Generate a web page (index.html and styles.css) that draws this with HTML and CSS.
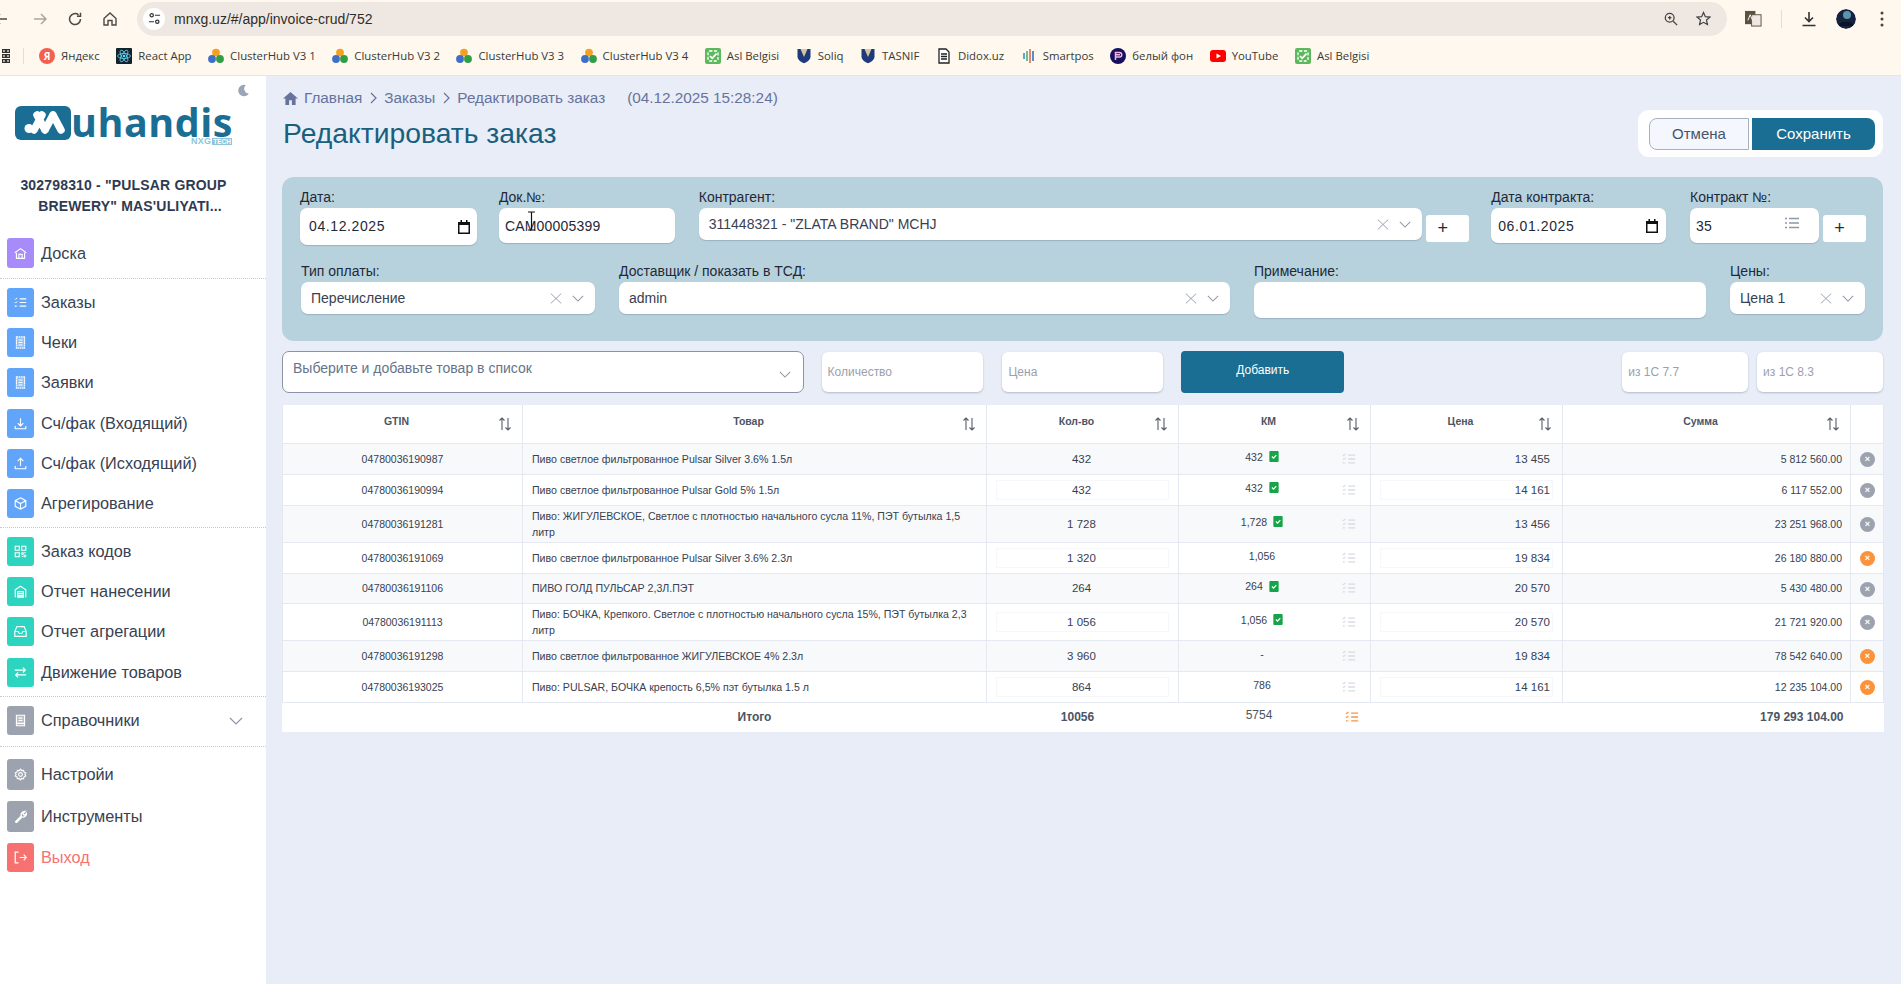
FILE: index.html
```html
<!DOCTYPE html>
<html lang="ru">
<head>
<meta charset="utf-8">
<title>Редактировать заказ</title>
<link rel="stylesheet" href="styles.css">
</head>
<body>
<svg class="defs" width="0" height="0" aria-hidden="true">
  <symbol id="cluster" viewBox="0 0 16 16"><circle cx="8" cy="4.6" r="3.9" fill="#f4a023"/><circle cx="4" cy="11" r="3.9" fill="#3f6fc4"/><circle cx="12" cy="11" r="3.9" fill="#2f9e44"/></symbol>
  <symbol id="asl" viewBox="0 0 16 16"><rect width="16" height="16" rx="2" fill="#5cb85c"/><rect x="3" y="3" width="10" height="10" rx="1.5" fill="none" stroke="#fff" stroke-width="1.3" stroke-dasharray="3 1.5"/><path d="M5 8l2.2 2.3L11.5 5.6" fill="none" stroke="#fff" stroke-width="1.8"/></symbol>
  <symbol id="shield" viewBox="0 0 16 16"><path d="M1.5 1h13v7.5c0 3.5-3.5 5.5-6.5 6.8-3-1.3-6.500-3.300-6.500-6.800z" fill="#1f3a7a"/><path d="M4.500 1h7L8 9z" fill="#d9c3a8"/></symbol>
  <symbol id="list" viewBox="0 0 16 16" fill="none" stroke="currentColor" stroke-width="1.500"><path d="M7 3.500h8M7 8h8M7 12.500h8"/><path d="M1 3.200l1 1 2-2M1 7.700l1 1 2-2" stroke-width="1.200"/><path d="M1 12.500h3" stroke-dasharray="1.500 .5"/></symbol>
  <symbol id="sort" viewBox="0 0 14 14" fill="none" stroke="currentColor" stroke-width="1.100"><path d="M4 13V1M1.500 3.500 4 1l2.500 2.500"/><path d="M10 1v12M7.500 10.500 10 13l2.500-2.500"/></symbol>
  <symbol id="chev" viewBox="0 0 14 8" fill="none" stroke="currentColor" stroke-width="1.200"><path d="M1 1l6 6 6-6"/></symbol>
  <symbol id="cross" viewBox="0 0 12 11" preserveAspectRatio="none" fill="none" stroke="currentColor" stroke-width="1"><path d="M.8.600l10.400 9.800M11.200.600.800 10.400"/></symbol>
  <symbol id="cal" viewBox="0 0 12 14"><path d="M0 2h12v12H0z" fill="#111"/><path d="M1.500 5h9v7.500h-9z" fill="#fff"/><path d="M2.500 0h1.500v3H2.500zM8 0h1.500v3H8z" fill="#111"/></symbol>
  <symbol id="check" viewBox="0 0 11 13"><rect width="11" height="13" rx="1.200" fill="#16a34a"/><path d="M3 6.500l2 2 3.200-3.600" fill="none" stroke="#fff" stroke-width="1.400"/></symbol>
  <symbol id="receipt" viewBox="0 0 16 16" fill="none" stroke="#fff"><path d="M3 1h10v14H3z" fill="#fff" fill-opacity=".3" stroke-width="1.500" stroke-dasharray="2 .8"/><path d="M5.500 5h5M5.500 8h5M5.500 11h5" stroke-width="1.300"/></symbol>
</svg>

<header class="chrome">
  <div class="toolbar">
    <svg class="tb-back" viewBox="0 0 14 14" fill="none" stroke="#4a4a45" stroke-width="1.500"><path d="M13 7H1M6 2 1 7l5 5"/></svg>
    <svg class="tb-icon tb-forward" viewBox="0 0 14 14" fill="none" stroke="#a9a59d" stroke-width="1.500"><path d="M1 7h12M8 2l5 5-5 5"/></svg>
    <svg class="tb-icon" viewBox="0 0 14 14" fill="none" stroke="#4a4a45" stroke-width="1.500"><path d="M12.500 7A5.500 5.500 0 1 1 10.500 2.800M12.500 .800v3.500H9"/></svg>
    <svg class="tb-icon" viewBox="0 0 14 14" fill="none" stroke="#4a4a45" stroke-width="1.400"><path d="M1 6.500 7 1l6 5.500V13H9V8.500H5V13H1z"/></svg>
    <div class="addr">
      <span class="tune"><svg viewBox="0 0 14 14" fill="none" stroke="#333" stroke-width="1.300"><circle cx="4" cy="3.500" r="1.800"/><path d="M7.500 3.500h5.500M1 10.500h5.500"/><circle cx="10" cy="10.500" r="1.800"/></svg></span>
      <span class="url">mnxg.uz/#/app/invoice-crud/752</span>
      <svg class="addr-zoom" viewBox="0 0 16 16" fill="none" stroke="#444" stroke-width="1.500"><circle cx="6.500" cy="6.500" r="5"/><path d="M10.500 10.500 15 15M4.500 6.500h4M6.500 4.500v4"/></svg>
      <svg class="addr-star" viewBox="0 0 16 16" fill="none" stroke="#444" stroke-width="1.300"><path d="M8 1.500l2 4.500 4.800.5-3.600 3.200 1 4.800L8 12.100 3.800 14.500l1-4.800L1.200 6.500 6 6z"/></svg>
    </div>
    <div class="tb-right">
      <svg class="tb-translate" viewBox="0 0 18 18"><rect x="0" y="1" width="11" height="14" fill="#5a5240"/><rect x="7" y="5" width="10" height="12" fill="#efe8e2" stroke="#5a5240"/><path d="M3 11l2.500-6L8 11" fill="none" stroke="#fff"/></svg>
      <span class="tb-sep"></span>
      <svg class="tb-dl" viewBox="0 0 16 16" fill="none" stroke="#333" stroke-width="1.600"><path d="M8 1v9M4 6.500 8 10.500 12 6.500M1.500 14.500h13"/></svg>
      <svg class="tb-avatar" viewBox="0 0 20 20"><circle cx="10" cy="10" r="10" fill="#14233f"/><circle cx="11" cy="6" r="4" fill="#5f93a8"/><path d="M3 15c3-3 10-3 14 0v2H3z" fill="#0a1426"/></svg>
      <svg class="tb-dots" viewBox="0 0 4 16" fill="#444"><circle cx="2" cy="2" r="1.500"/><circle cx="2" cy="8" r="1.500"/><circle cx="2" cy="14" r="1.500"/></svg>
    </div>
  </div>
  <nav class="bookmarks">
    <svg class="apps" viewBox="0 0 8 14" fill="none" stroke="#333" stroke-width="1.200"><path d="M.600.600h2.800v2.800H.600zM4.600.600h2.800v2.800H4.600zM.600 5.600h2.800v2.800H.600zM4.600 5.600h2.800v2.800H4.600zM.600 10.600h2.800v2.800H.600zM4.600 10.600h2.800v2.800H4.600z"/></svg>
    <span class="bm-sep"></span>
    <a class="bm"><span class="ya">Я</span>Яндекс</a>
    <a class="bm"><svg class="bm-i" viewBox="0 0 16 16"><rect width="16" height="16" rx="1" fill="#14222b"/><g fill="none" stroke="#61dafb" stroke-width=".8"><ellipse cx="8" cy="8" rx="6.500" ry="2.500"/><ellipse cx="8" cy="8" rx="6.500" ry="2.500" transform="rotate(60 8 8)"/><ellipse cx="8" cy="8" rx="6.500" ry="2.500" transform="rotate(120 8 8)"/></g><circle cx="8" cy="8" r="1.300" fill="#61dafb"/></svg>React App</a>
    <a class="bm"><svg class="bm-i"><use href="#cluster"/></svg>ClusterHub V3 1</a>
    <a class="bm"><svg class="bm-i"><use href="#cluster"/></svg>ClusterHub V3 2</a>
    <a class="bm"><svg class="bm-i"><use href="#cluster"/></svg>ClusterHub V3 3</a>
    <a class="bm"><svg class="bm-i"><use href="#cluster"/></svg>ClusterHub V3 4</a>
    <a class="bm"><svg class="bm-i"><use href="#asl"/></svg>Asl Belgisi</a>
    <a class="bm"><svg class="bm-i"><use href="#shield"/></svg>Soliq</a>
    <a class="bm"><svg class="bm-i"><use href="#shield"/></svg>TASNIF</a>
    <a class="bm"><svg class="bm-i" viewBox="0 0 16 16" fill="#fff" stroke="#222" stroke-width="1.300"><path d="M3 1h7l3 3v11H3z"/><path d="M5 6h6M5 8.500h6M5 11h6"/></svg>Didox.uz</a>
    <a class="bm"><svg class="bm-i" viewBox="0 0 16 16"><path d="M2 5h2v6H2z" fill="#5aa9c9"/><path d="M5 3h2v10H5z" fill="#7fb98a"/><path d="M8 1h2v14H8z" fill="#e08b6d"/><path d="M11 3h2v10h-2z" fill="#5f8dc9"/></svg>Smartpos</a>
    <a class="bm"><svg class="bm-i" viewBox="0 0 16 16"><circle cx="8" cy="8" r="8" fill="#16105e"/><path d="M5.500 12V4.500h4a2 2 0 0 1 0 4.500h-4M5 6.800h5" fill="none" stroke="#f3b6e0" stroke-width="1.500"/></svg>белый фон</a>
    <a class="bm"><svg class="bm-i" viewBox="0 0 16 16"><rect y="2" width="16" height="12" rx="3" fill="#f00"/><path d="M6.500 5.500v5L11 8z" fill="#fff"/></svg>YouTube</a>
    <a class="bm"><svg class="bm-i"><use href="#asl"/></svg>Asl Belgisi</a>
  </nav>
</header>

<div class="app">
  <aside class="sidebar">
    <svg class="moon" viewBox="0 0 12 13"><path d="M8.500.500A6.300 6.300 0 1 0 11.800 10 5.500 5.500 0 0 1 8.500.500z" fill="#9aa5b8"/></svg>
    <div class="logo">
      <svg class="logo-mark" viewBox="0 0 56 34"><rect width="56" height="34" rx="6" fill="#1b6e93"/><circle cx="14" cy="22.500" r="4.500" fill="#fff"/><path d="M19 24 27 9M30 24 22 9M30 24 38 9M46 24 38 9" stroke="#fff" stroke-width="7.500" stroke-linecap="round" fill="none"/></svg>
      <div class="logo-words">
        <span class="logo-name">uhandis</span>
        <span class="logo-sub">NXG<b>TECH</b></span>
      </div>
    </div>
    <div class="org">302798310 - "PULSAR GROUP<br><span class="org-second">BREWERY" MAS'ULIYATI...</span></div>
    <nav class="nav">
      <div class="group first">
        <a class="item"><span class="ic purple"><svg viewBox="0 0 16 16" fill="none" stroke="#fff" stroke-width="1.400"><path d="M1 7 8 2l7 5M3 7v7h10V7M6 14V9h4v5"/></svg></span>Доска</a>
      </div>
      <div class="group">
        <a class="item"><span class="ic blue"><svg viewBox="0 0 16 16" color="#fff"><use href="#list"/></svg></span>Заказы</a>
        <a class="item"><span class="ic blue"><svg viewBox="0 0 16 16"><use href="#receipt"/></svg></span>Чеки</a>
        <a class="item"><span class="ic blue"><svg viewBox="0 0 16 16"><use href="#receipt"/></svg></span>Заявки</a>
        <a class="item"><span class="ic blue"><svg viewBox="0 0 16 16" fill="none" stroke="#fff" stroke-width="1.400"><path d="M8 1.500v9M4.500 7.500 8 11l3.500-3.500M1.500 11v3.500h13V11"/></svg></span>Сч/фак (Входящий)</a>
        <a class="item"><span class="ic blue"><svg viewBox="0 0 16 16" fill="none" stroke="#fff" stroke-width="1.400"><path d="M8 11V1.500M4.500 5 8 1.500 11.500 5M1.500 11v3.500h13V11"/></svg></span>Сч/фак (Исходящий)</a>
        <a class="item"><span class="ic blue"><svg viewBox="0 0 16 16" fill="none" stroke="#fff" stroke-width="1.400"><path d="M8 1l6.500 3.500v7L8 15l-6.500-3.500v-7zM1.500 4.500 8 8l6.500-3.500M8 8v7"/></svg></span>Агрегирование</a>
      </div>
      <div class="group">
        <a class="item"><span class="ic teal"><svg viewBox="0 0 16 16" fill="none" stroke="#fff" stroke-width="1.400"><path d="M1.500 1.500h5v5h-5zM9.500 1.500h5v5h-5zM1.500 9.500h5v5h-5z"/><path d="M9.500 9.500h2v2h-2zM12.500 12.500h2v2h-2zM12.500 9.500h2M9.500 14h2" stroke-width="1.200"/></svg></span>Заказ кодов</a>
        <a class="item"><span class="ic teal"><svg viewBox="0 0 16 16" fill="none" stroke="#fff" stroke-width="1.400"><path d="M1.500 15V6L8 1.500 14.500 6v9"/><path d="M4.500 8h7v7h-7zM4.500 10.500h7M4.500 13h7" fill="#fff" fill-opacity=".3"/></svg></span>Отчет нанесении</a>
        <a class="item"><span class="ic teal"><svg viewBox="0 0 16 16" fill="none" stroke="#fff" stroke-width="1.400"><path d="M3.500 2h9L15 8v6H1V8zM1 8h4l1.500 2.500h3L11 8h4"/></svg></span>Отчет агрегации</a>
        <a class="item"><span class="ic teal"><svg viewBox="0 0 16 16" fill="none" stroke="#fff" stroke-width="1.400"><path d="M1 5h13M11 2l3 3-3 3M15 11H2M5 8l-3 3 3 3"/></svg></span>Движение товаров</a>
      </div>
      <div class="group single">
        <a class="item"><span class="ic gray"><svg viewBox="0 0 16 16" fill="none" stroke="#fff" stroke-width="1.400"><path d="M3 1.500h10v13H3z" fill="#fff" fill-opacity=".3"/><path d="M5.500 5h5M5.500 8h5M3 11.500h10"/></svg></span>Справочники<svg class="nav-chev"><use href="#chev"/></svg></a>
      </div>
      <div class="group last">
        <a class="item tall"><span class="ic gray"><svg viewBox="0 0 16 16" fill="none" stroke="#fff" stroke-width="1.400"><circle cx="8" cy="8" r="2.300"/><path d="M8 1.500l1.500 1.800 2.300-.4.600 2.300 2.100 1L13.400 8l1.100 1.800-2.100 1-.6 2.300-2.300-.4L8 14.500l-1.500-1.800-2.300.4-.6-2.300-2.100-1L2.600 8 1.500 6.200l2.100-1 .6-2.300 2.300.4z"/></svg></span>Настройи</a>
        <a class="item tall"><span class="ic gray"><svg viewBox="0 0 16 16" fill="none" stroke="#fff" stroke-width="1.700"><path d="M2 14.500l7-7c-.8-2.500.5-5.500 4.500-5.800L11 4.300l.7 1.500 1.500.6 2.300-2.400c-.2 3.600-3 5.300-5.800 4.500l-6.700 7z"/></svg></span>Инструменты</a>
        <a class="item exit"><span class="ic red"><svg viewBox="0 0 16 16" fill="none" stroke="#fff" stroke-width="1.500"><path d="M5.500 1.500H1.500v13h4M7 8h8M12 4.500 15 8l-3 3.500"/></svg></span>Выход</a>
      </div>
    </nav>
  </aside>

  <main class="main">
    <div class="page-head">
      <div class="heading">
        <div class="crumbs">
          <svg class="crumb-home" viewBox="0 0 16 14"><path d="M8 0 0 7h2.500v7h4V9h3v5h4V7H16z" fill="#67739c"/></svg>
          <span>Главная</span><svg class="crumb-sep" viewBox="0 0 7 12" fill="none" stroke="#67739c" stroke-width="1.200"><path d="M1 1l5 5-5 5"/></svg>
          <span>Заказы</span><svg class="crumb-sep" viewBox="0 0 7 12" fill="none" stroke="#67739c" stroke-width="1.200"><path d="M1 1l5 5-5 5"/></svg>
          <span>Редактировать заказ</span>
          <span class="stamp">(04.12.2025 15:28:24)</span>
        </div>
        <h1 class="title">Редактировать заказ</h1>
      </div>
      <div class="actions">
        <button class="btn ghost">Отмена</button>
        <button class="btn solid">Сохранить</button>
      </div>
    </div>

    <section class="panel">
      <div class="frow one">
        <div class="fld w-date"><label>Дата:</label><div class="box tall-box date"><span class="spaced">04.12.2025</span><svg class="cal"><use href="#cal"/></svg></div></div>
        <div class="fld w-doc"><label>Док.№:</label><div class="box mid-box doc">CAM00005399<svg class="ibeam" viewBox="0 0 9 20" fill="none" stroke="#111" stroke-width="1.200"><path d="M1 1h7M4.500 1v18M1 19h7"/></svg></div></div>
        <div class="fld w-contr"><label>Контрагент:</label><div class="box sel-box"><span>311448321 - "ZLATA BRAND" MCHJ</span><svg class="x"><use href="#cross"/></svg><svg class="ch"><use href="#chev"/></svg></div></div>
        <div class="plus"><span>+</span></div>
        <div class="fld w-cdate"><label>Дата контракта:</label><div class="box mid-box date2"><span class="spaced">06.01.2025</span><svg class="cal"><use href="#cal"/></svg></div></div>
        <div class="fld w-cno"><label>Контракт №:</label><div class="box mid-box cno"><span>35</span><svg class="lst" viewBox="0 0 14 12" fill="none" stroke="#8f98a8" stroke-width="1.400"><path d="M4 1.500h10M4 6h10M4 10.500h10M0 1.500h2M0 6h2M0 10.500h2"/></svg></div></div>
        <div class="plus end"><span>+</span></div>
      </div>
      <div class="frow two">
        <div class="fld w-pay"><label>Тип оплаты:</label><div class="box sel-box dim"><span>Перечисление</span><svg class="x"><use href="#cross"/></svg><svg class="ch"><use href="#chev"/></svg></div></div>
        <div class="fld w-del"><label>Доставщик / показать в ТСД:</label><div class="box sel-box dim"><span>admin</span><svg class="x"><use href="#cross"/></svg><svg class="ch"><use href="#chev"/></svg></div></div>
        <div class="fld w-note"><label>Примечание:</label><div class="box note"></div></div>
        <div class="fld w-price"><label>Цены:</label><div class="box sel-box dim"><span>Цена 1</span><svg class="x"><use href="#cross"/></svg><svg class="ch"><use href="#chev"/></svg></div></div>
      </div>
    </section>

    <div class="addrow">
      <div class="picker"><span>Выберите и добавьте товар в список</span><svg class="ch"><use href="#chev"/></svg></div>
      <div class="ph w-qty">Количество</div>
      <div class="ph w-cost">Цена</div>
      <button class="add">Добавить</button>
      <div class="ph w-1c push">из 1С 7.7</div>
      <div class="ph w-1c">из 1С 8.3</div>
    </div>

    <table class="grid">
      <colgroup><col class="c-gtin"><col class="c-name"><col class="c-num"><col class="c-num"><col class="c-num"><col class="c-sum"><col class="c-del"></colgroup>
      <thead>
        <tr>
          <th><div class="th"><span>GTIN</span><svg class="sort"><use href="#sort"/></svg></div></th>
          <th><div class="th"><span>Товар</span><svg class="sort"><use href="#sort"/></svg></div></th>
          <th><div class="th"><span>Кол-во</span><svg class="sort"><use href="#sort"/></svg></div></th>
          <th><div class="th"><span>КМ</span><svg class="sort"><use href="#sort"/></svg></div></th>
          <th><div class="th"><span>Цена</span><svg class="sort"><use href="#sort"/></svg></div></th>
          <th><div class="th"><span>Сумма</span><svg class="sort"><use href="#sort"/></svg></div></th>
          <th></th>
        </tr>
      </thead>
      <tbody>
        <tr class="odd h31"><td class="gtin">04780036190987</td><td class="name">Пиво светлое фильтрованное Pulsar Silver 3.6% 1.5л</td><td><div class="cellbox mid">432</div></td><td><div class="km"><span class="km-v">432<svg class="ok"><use href="#check"/></svg></span><svg class="km-l"><use href="#list"/></svg></div></td><td><div class="cellbox">13 455</div></td><td class="sum">5 812 560.00</td><td><span class="del">×</span></td></tr>
        <tr class="h31"><td class="gtin">04780036190994</td><td class="name">Пиво светлое фильтрованное Pulsar Gold 5% 1.5л</td><td><div class="cellbox mid">432</div></td><td><div class="km"><span class="km-v">432<svg class="ok"><use href="#check"/></svg></span><svg class="km-l"><use href="#list"/></svg></div></td><td><div class="cellbox">14 161</div></td><td class="sum">6 117 552.00</td><td><span class="del">×</span></td></tr>
        <tr class="odd h37"><td class="gtin">04780036191281</td><td class="name">Пиво: ЖИГУЛЕВСКОЕ, Светлое с плотностью начального сусла 11%, ПЭТ бутылка 1,5 литр</td><td><div class="cellbox mid">1 728</div></td><td><div class="km"><span class="km-v">1,728<svg class="ok"><use href="#check"/></svg></span><svg class="km-l"><use href="#list"/></svg></div></td><td><div class="cellbox">13 456</div></td><td class="sum">23 251 968.00</td><td><span class="del">×</span></td></tr>
        <tr class="h31"><td class="gtin">04780036191069</td><td class="name">Пиво светлое фильтрованное Pulsar Silver 3.6% 2.3л</td><td><div class="cellbox mid">1 320</div></td><td><div class="km"><span class="km-v">1,056</span><svg class="km-l"><use href="#list"/></svg></div></td><td><div class="cellbox">19 834</div></td><td class="sum">26 180 880.00</td><td><span class="del warn">×</span></td></tr>
        <tr class="odd h30"><td class="gtin">04780036191106</td><td class="name">ПИВО ГОЛД ПУЛЬСАР 2,3Л.ПЭТ</td><td><div class="cellbox mid">264</div></td><td><div class="km"><span class="km-v">264<svg class="ok"><use href="#check"/></svg></span><svg class="km-l"><use href="#list"/></svg></div></td><td><div class="cellbox">20 570</div></td><td class="sum">5 430 480.00</td><td><span class="del">×</span></td></tr>
        <tr class="h37"><td class="gtin">04780036191113</td><td class="name">Пиво: БОЧКА, Крепкого. Светлое с плотностью начального сусла 15%, ПЭТ бутылка 2,3 литр</td><td><div class="cellbox mid">1 056</div></td><td><div class="km"><span class="km-v">1,056<svg class="ok"><use href="#check"/></svg></span><svg class="km-l"><use href="#list"/></svg></div></td><td><div class="cellbox">20 570</div></td><td class="sum">21 721 920.00</td><td><span class="del">×</span></td></tr>
        <tr class="odd h31"><td class="gtin">04780036191298</td><td class="name">Пиво светлое фильтрованное ЖИГУЛЕВСКОЕ 4% 2.3л</td><td><div class="cellbox mid">3 960</div></td><td><div class="km"><span class="km-v">-</span><svg class="km-l"><use href="#list"/></svg></div></td><td><div class="cellbox">19 834</div></td><td class="sum">78 542 640.00</td><td><span class="del warn">×</span></td></tr>
        <tr class="h31"><td class="gtin">04780036193025</td><td class="name">Пиво: PULSAR, БОЧКА крепость 6,5% пэт бутылка 1.5 л</td><td><div class="cellbox mid">864</div></td><td><div class="km"><span class="km-v">786</span><svg class="km-l"><use href="#list"/></svg></div></td><td><div class="cellbox">14 161</div></td><td class="sum">12 235 104.00</td><td><span class="del warn">×</span></td></tr>
      </tbody>
      <tfoot>
        <tr class="h30"><td></td><td class="tot-label">Итого</td><td class="tot-qty">10056</td><td><div class="km tot"><span class="km-v">5754</span><svg class="km-l"><use href="#list"/></svg></div></td><td></td><td class="tot-sum">179 293 104.00</td><td></td></tr>
      </tfoot>
    </table>
  </main>
</div>
</body>
</html>
```

FILE: styles.css
```css
* { box-sizing: border-box; }
html, body { margin: 0; height: 984px; overflow: hidden; }
body { font-family: "Liberation Sans", Arial, sans-serif; color: #374151; background: #e8edf7; }
.defs { position: absolute; }
svg { display: block; flex: none; }

/* Browser chrome */
.chrome { height: 76px; background: #fef8ee; border-bottom: 1px solid #ece3d2; }
.toolbar { height: 36px; display: flex; align-items: center; padding-top: 1px; }
.tb-back { width: 14px; height: 14px; margin-left: -6px; margin-right: 24px; }
.tb-icon { width: 14px; height: 14px; margin-right: 21px; }
.tb-forward { margin-left: 1px; }
.addr { width: 1590px; height: 34px; margin-left: -1px; display: flex; align-items: center; background: #efe8e2; border-radius: 17px; padding-left: 6px; padding-right: 16px; }
.tune { width: 22px; height: 22px; border-radius: 50%; background: #fff; display: flex; align-items: center; justify-content: center; }
.tune svg { width: 13px; height: 13px; }
.url { margin-left: 9px; font-size: 14px; color: #2f2d2a; flex: 1; }
.addr-zoom { width: 14px; height: 14px; margin-right: 18px; }
.addr-star { width: 15px; height: 15px; }
.tb-right { display: flex; align-items: center; margin-left: 18px; }
.tb-translate { width: 17px; height: 17px; }
.tb-sep { width: 1px; height: 18px; background: #f0dfa8; margin: 0 19px; }
.tb-dl { width: 16px; height: 16px; margin-right: 19px; }
.tb-avatar { width: 20px; height: 20px; margin-right: 24px; border-radius: 50%; }
.tb-dots { width: 4px; height: 16px; }
.bookmarks { height: 39px; display: flex; align-items: center; padding-left: 2px; color: #3a3a36; font-family: "Open Sans", "Liberation Sans", sans-serif; }
.apps { width: 8px; height: 14px; }
.bm-sep { width: 1px; height: 16px; background: #f0dfa8; margin: 0 15px 0 13px; }
.bm { display: flex; align-items: center; gap: 6px; margin-right: 16.500px; white-space: nowrap; font-size: 11.400px; }
.bm-i { width: 16px; height: 16px; }
.ya { width: 16px; height: 16px; border-radius: 50%; background: #f2604e; color: #fff; font-size: 10px; font-weight: 700; display: flex; align-items: center; justify-content: center; }

/* App frame */
.app { display: flex; height: 908px; }
.sidebar { width: 266px; background: #fff; position: relative; flex: none; }
.moon { position: absolute; left: 238px; top: 8px; width: 11px; height: 13px; }

.logo { display: flex; gap: 5px; padding: 30px 0 0 15px; height: 93px; }
.logo-mark { width: 56px; height: 34px; }
.logo-words { display: flex; flex-direction: column; align-items: flex-end; width: 157px; }
.logo-name { font-family: "Open Sans", sans-serif; font-weight: 700; font-size: 39.500px; line-height: 32px; color: #1b6e93; letter-spacing: .5px; }
.logo-sub { display: flex; align-items: center; font-size: 9px; font-weight: 700; line-height: 7px; height: 7px; color: #8fc4da; padding-right: 1px; letter-spacing: .3px; }
.logo-sub b { background: #8fc4da; color: #fff; margin-left: 1px; padding: 0 1px; font-size: 6.500px; line-height: 7px; letter-spacing: 0; }
.org { font-size: 14px; font-weight: 700; line-height: 21px; letter-spacing: .17px; color: #2f3a52; text-align: center; padding: 6px 0 0 0; height: 69px; width: 247px; white-space: nowrap; }
.org-second { display: inline-block; padding-left: 13px; }

.nav { display: flex; flex-direction: column; }
.group { display: flex; flex-direction: column; gap: 11.200px; border-bottom: 1px dotted #c9c9c9; padding: 9px 0; }
.group.first { padding: 0 0 10px; }
.group.first .item { height: 30px; }
.group.single { padding: 9px 0 11px; }
.group.last { border-bottom: 0; padding-top: 12px; }
.item { display: flex; align-items: center; height: 29px; font-size: 16.300px; color: #374151; position: relative; }
.item.tall { height: 31px; }
.item.exit { color: #f87171; }
.ic { width: 27px; height: 100%; margin: 0 7px; border-radius: 3px; display: flex; align-items: center; justify-content: center; }
.ic svg { width: 13px; height: 13px; }
.purple { background: #a78bfa; }
.blue { background: #60a5fa; }
.teal { background: #2dd4bf; }
.gray { background: #9ca3af; }
.red { background: #f87171; }
.nav-chev { position: absolute; left: 229px; top: 11px; width: 14px; height: 8px; color: #8e97a8; }

/* Main */
.main { flex: 1; padding: 0 18px 0 16px; min-width: 0; }
.page-head { display: flex; justify-content: space-between; align-items: flex-start; height: 101px; }
.heading { padding-top: 14px; }
.crumbs { display: flex; align-items: center; height: 16px; font-size: 15.300px; color: #67739c; }
.crumb-home { width: 15px; height: 13px; margin: 0 6px 0 1px; }
.crumb-sep { width: 7px; height: 12px; margin: 0 7.500px; }
.stamp { margin-left: 22px; }
.title { margin: 10px 0 0 1px; font-size: 28.300px; font-weight: 400; line-height: 34px; color: #1b5f7f; }
.actions { display: flex; gap: 3px; margin-top: 34px; padding: 8px 8px 7px 11px; background: #fff; border-radius: 11px; height: 47px; }
.btn { font: 15px "Liberation Sans", sans-serif; height: 32px; padding: 0 0 2px; }
.ghost { width: 100px; background: #f4f7fe; border: 1px solid #a9b0bd; border-radius: 8px 0 0 8px; color: #475569; }
.solid { width: 123px; background: #1b6e93; color: #fff; border: 0; border-radius: 0 8px 8px 0; }

/* Form panel */
.panel { height: 164px; background: #b7d2dd; border-radius: 12px; padding: 12px 17px 0 18px; }
.frow { display: flex; align-items: flex-start; }
.frow.two { margin-top: 18px; padding-left: 1px; }
.fld label { display: block; height: 16px; margin-bottom: 3px; font-size: 14px; line-height: 16px; color: #1f2937; }
.box { background: #fff; border-radius: 7px; box-shadow: 0 1px 1px rgba(100,116,139,.35); display: flex; align-items: center; font-size: 14px; color: #1f2937; position: relative; }
.tall-box { height: 37px; }
.mid-box { height: 35px; margin-top: 1px; }
.sel-box { height: 32px; padding-left: 10px; }
.sel-box span { flex: 1; color: #374151; }
.dim span { color: #374151; }
.w-date { width: 177px; margin-right: 22px; }
.w-doc { width: 176px; margin-right: 24px; }
.w-contr { width: 724px; }
.plus { width: 43px; height: 27px; margin: 26px 22px 0 4px; padding-right: 10px; background: #fff; border-radius: 3px; display: flex; align-items: center; justify-content: center; font-size: 18px; color: #1f2937; }
.plus.end { margin-right: 0; }
.w-cdate { width: 175px; margin-right: 24px; }
.w-cno { width: 129px; }
.w-pay { width: 294px; margin-right: 24px; }
.w-del { width: 611px; margin-right: 24px; }
.w-note { width: 452px; margin-right: 24px; }
.w-price { width: 135px; }
.date { padding-left: 9px; padding-bottom: 2px; }
.date .cal { margin-top: 2px; }
.date2 { padding-left: 7px; }
.spaced { letter-spacing: .6px; flex: 1; }
.cal { width: 12px; height: 14px; margin-right: 7px; }
.date2 .cal { margin-right: 8px; }
.doc { padding-left: 6px; letter-spacing: .2px; }
.ibeam { position: absolute; left: 28px; top: 3px; width: 9px; height: 20px; }
.cno { padding-left: 6px; }
.cno span { flex: 1; }
.lst { width: 14px; height: 12px; margin: 0 20px 6px 0; }
.x { width: 12px; height: 11px; color: #9aa3b2; margin-right: 10px; }
.ch { width: 12px; height: 7px; color: #8f98a8; margin-right: 11px; }
.note { height: 36px; }

/* Add row */
.addrow { display: flex; align-items: center; gap: 18px; margin-top: 10px; height: 42px; }
.picker { width: 522px; height: 42px; background: #fff; border: 1px solid #8b93a5; border-radius: 7px; display: flex; padding: 6px 10px 0 10px; font-size: 14px; color: #64748b; }
.picker span { flex: 1; line-height: 20px; }
.picker .ch { margin: 13px 2px 0 0; }
.ph { height: 40px; background: #fff; border-radius: 6px; box-shadow: 0 1px 2px rgba(100,116,139,.4); display: flex; align-items: center; padding-left: 6px; font-size: 12px; color: #9aa1ae; }
.w-qty { width: 162px; }
.w-cost { width: 161px; margin-left: 1px; }
.w-1c { width: 126px; }
.push { margin-left: 260px; margin-right: -9px; }
.add { width: 163px; height: 42px; background: #1b6e93; border: 0; border-radius: 4px; color: #fff; font: 12px "Liberation Sans", sans-serif; padding: 0 0 4px; }

/* Table */
.grid { width: 1601px; margin-top: 12px; border-collapse: collapse; table-layout: fixed; background: #fff; font-size: 10.500px; color: #374151; }
.c-gtin { width: 240px; }
.c-name { width: 464px; }
.c-num { width: 192px; }
.c-sum { width: 288px; }
.c-del { width: 33px; }
.grid th, .grid td { border: 1px solid #e4e9f1; padding: 0; }
.grid thead tr { height: 38px; }
.grid th { font-size: 10.500px; font-weight: 700; color: #4b5563; vertical-align: top; border-top: 0; }
.th { display: flex; align-items: flex-start; padding: 9px 10px 0 12px; }
.th span { flex: 1; text-align: center; line-height: 14px; }
.sort { width: 14px; height: 14px; margin-top: 3px; color: #555c68; }
.odd { background: #f7f9fb; }
.h31 { height: 31px; }
.h30 { height: 30px; }
.h37 { height: 37px; }
.gtin { text-align: center; padding-left: 0; }
.grid td.gtin { padding-right: 0; }
.grid td.name { padding: 0 9px; line-height: 16px; font-size: 10.600px; }
.cellbox { height: 20px; margin: 0 9px; padding: 0 2px; border: 1px solid transparent; font-size: 11.500px; display: flex; align-items: center; justify-content: flex-end; color: #374151; }
.cellbox.mid { justify-content: center; padding-right: 4px; }
tr:not(.odd) .cellbox { border-color: #f5f7fa; }
.km { display: flex; align-items: center; padding: 0 14px 0 3px; position: relative; }
.km-v { flex: 1; display: flex; justify-content: center; align-items: center; gap: 6px; position: relative; top: -2px; }
.ok { width: 10px; height: 11px; }
.km-l { width: 14px; height: 14px; color: #d8dce3; }
.grid td.sum { text-align: right; padding-right: 8px; }
.del { display: flex; align-items: center; justify-content: center; width: 15px; height: 15px; margin: 2px 0 0 9px; border-radius: 50%; background: #9ca3af; color: #fff; font-size: 9px; font-weight: 700; line-height: 1; }
.del.warn { background: #fb923c; }
tfoot td { font-weight: 700; font-size: 12px; color: #4b5563; }
.grid tfoot td { border-left: 0; border-right: 0; border-bottom: 0; }
.tot-label { text-align: center; }
.tot-qty { text-align: center; }
.grid .tot-qty { padding-right: 10px; }
.grid .tot-sum { text-align: right; padding-right: 7px; }
.km.tot { font-weight: 400; font-size: 12px; }
.km.tot .km-l { color: #fb923c; margin-left: 2px; margin-right: -2px; }
.km.tot .km-v { padding-right: 6px; }
```
